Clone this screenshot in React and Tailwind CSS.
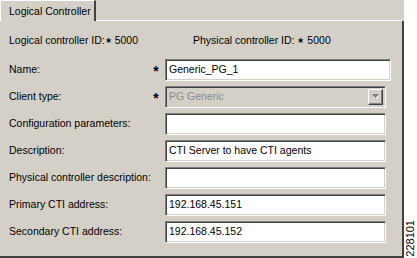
import React from "react";

const font = { fontFamily: '"Liberation Sans", Arial, sans-serif' };

function Sunken({ children, className = "" }) {
  return (
    <div
      className={
        "h-[22px] border border-t-[#808080] border-l-[#808080] border-b-white border-r-white shadow-[inset_1px_1px_0_#404040,inset_-1px_-1px_0_#d4d0c8] flex items-center pl-[3px] text-[10.5px] " +
        className
      }
    >
      {children}
    </div>
  );
}

function Row({ label, star, children }) {
  return (
    <div className="h-[27px] flex items-center">
      <div className="w-[147px] pl-[9px] text-[10.5px] text-black whitespace-nowrap">{label}</div>
      <div className="w-[18px] text-[14px] font-bold leading-none text-black flex justify-center pt-[3px]">
        {star ? "*" : ""}
      </div>
      {children}
    </div>
  );
}

export default function App() {
  return (
    <div className="w-[417px] h-[258px] bg-white flex overflow-hidden" style={font}>
      <div className="w-[404px] h-[258px] flex flex-col bg-[#d4d0c8]">
        <div className="h-[21px] flex">
          <div className="w-[96px] h-[21px] pt-[1px] border-t border-l border-t-white border-l-white border-r-2 border-r-[#404040] flex items-center pl-[8px] text-[10.5px] text-black">
            Logical Controller
          </div>
          <div className="flex-1 border-b border-b-white mr-[2px]" />
        </div>
        <div className="flex-1 flex flex-col border-r-2 border-b-2 border-r-[#404040] border-b-[#404040]">
          <div className="h-[35px] pt-[5px] flex items-center text-[10.5px] text-black">
            <div className="w-[193px] pl-[9px] whitespace-nowrap">
              Logical controller ID:<span className="text-[8px] align-middle">★</span> 5000
            </div>
            <div className="whitespace-nowrap">
              Physical controller ID: <span className="text-[8px] align-middle">★</span> 5000
            </div>
          </div>
          <Row label="Name:" star>
            <Sunken className="w-[226px] bg-white">Generic_PG_1</Sunken>
          </Row>
          <Row label="Client type:" star>
            <Sunken className="w-[221px] bg-[#d4d0c8] text-[#8a8a8a] justify-between pr-[2px]">
              <span>PG Generic</span>
              <div className="w-[15px] h-[16px] border border-t-white border-l-white border-b-[#404040] border-r-[#404040] shadow-[inset_-1px_-1px_0_#808080] flex items-center justify-center">
                <svg width="7" height="5" viewBox="0 0 7 5">
                  <polygon points="0,0 7,0 3.5,4" fill="#808080" />
                  <polygon points="4,4 7,1 7,2 4.5,5" fill="#ffffff" />
                </svg>
              </div>
            </Sunken>
          </Row>
          <Row label="Configuration parameters:">
            <Sunken className="w-[221px] bg-white" />
          </Row>
          <Row label="Description:">
            <Sunken className="w-[221px] bg-white">CTI Server to have CTI agents</Sunken>
          </Row>
          <Row label="Physical controller description:">
            <Sunken className="w-[221px] bg-white" />
          </Row>
          <Row label="Primary CTI address:">
            <Sunken className="w-[221px] bg-white">192.168.45.151</Sunken>
          </Row>
          <Row label="Secondary CTI address:">
            <Sunken className="w-[221px] bg-white">192.168.45.152</Sunken>
          </Row>
        </div>
      </div>
      <div className="flex-1 flex flex-col justify-end items-center pb-[1px]">
        <div className="[writing-mode:vertical-rl] rotate-180 text-[11px] text-black leading-none">228101</div>
      </div>
    </div>
  );
}
